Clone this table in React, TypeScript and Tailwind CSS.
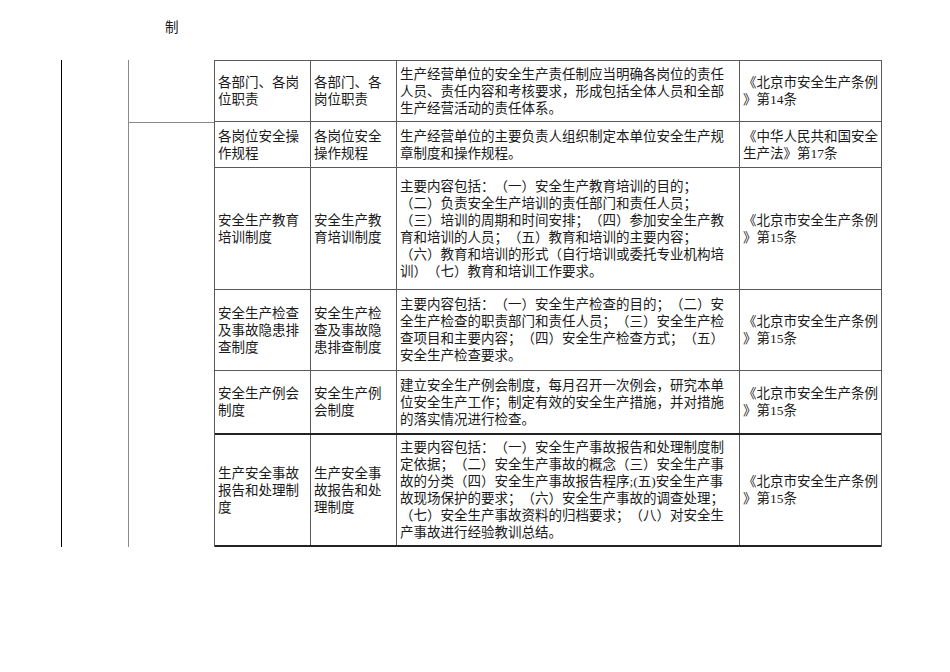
import React from "react";

type Row = {
  h: string;
  name: string[];
  name2: string[];
  content: string[];
  basis: string[];
};

const beijing = ["《北京市安全生产条例", "》第15条"];

const rows: Row[] = [
  {
    h: "h-[61px]",
    name: ["各部门、各岗", "位职责"],
    name2: ["各部门、各", "岗位职责"],
    content: [
      "生产经营单位的安全生产责任制应当明确各岗位的责任",
      "人员、责任内容和考核要求，形成包括全体人员和全部",
      "生产经营活动的责任体系。",
    ],
    basis: ["《北京市安全生产条例", "》第14条"],
  },
  {
    h: "h-[46px]",
    name: ["各岗位安全操", "作规程"],
    name2: ["各岗位安全", "操作规程"],
    content: ["生产经营单位的主要负责人组织制定本单位安全生产规", "章制度和操作规程。"],
    basis: ["《中华人民共和国安全", "生产法》第17条"],
  },
  {
    h: "h-[122px]",
    name: ["安全生产教育", "培训制度"],
    name2: ["安全生产教", "育培训制度"],
    content: [
      "主要内容包括：（一）安全生产教育培训的目的；",
      "（二）负责安全生产培训的责任部门和责任人员；",
      "（三）培训的周期和时间安排；（四）参加安全生产教",
      "育和培训的人员；（五）教育和培训的主要内容；",
      "（六）教育和培训的形式（自行培训或委托专业机构培",
      "训）（七）教育和培训工作要求。",
    ],
    basis: beijing,
  },
  {
    h: "h-[81px]",
    name: ["安全生产检查", "及事故隐患排", "查制度"],
    name2: ["安全生产检", "查及事故隐", "患排查制度"],
    content: [
      "主要内容包括：（一）安全生产检查的目的；（二）安",
      "全生产检查的职责部门和责任人员；（三）安全生产检",
      "查项目和主要内容；（四）安全生产检查方式；（五）",
      "安全生产检查要求。",
    ],
    basis: beijing,
  },
  {
    h: "h-[64px]",
    name: ["安全生产例会", "制度"],
    name2: ["安全生产例", "会制度"],
    content: [
      "建立安全生产例会制度，每月召开一次例会，研究本单",
      "位安全生产工作；制定有效的安全生产措施，并对措施",
      "的落实情况进行检查。",
    ],
    basis: beijing,
  },
  {
    h: "h-[112px]",
    name: ["生产安全事故", "报告和处理制", "度"],
    name2: ["生产安全事", "故报告和处", "理制度"],
    content: [
      "主要内容包括：（一）安全生产事故报告和处理制度制",
      "定依据；（二）安全生产事故的概念（三）安全生产事",
      "故的分类（四）安全生产事故报告程序;(五)安全生产事",
      "故现场保护的要求；（六）安全生产事故的调查处理；",
      "（七）安全生产事故资料的归档要求；（八）对安全生",
      "产事故进行经验教训总结。",
    ],
    basis: beijing,
  },
];

function Cell({ lines, w, last }: { lines: string[]; w: string; last?: boolean }) {
  return (
    <div className={`${w} flex flex-col justify-center pl-[3px] ${last ? "" : "border-r border-[#5a5a5a]"}`}>
      {lines.map((l, i) => (
        <div key={i} className="whitespace-nowrap leading-[17px]">
          {l}
        </div>
      ))}
    </div>
  );
}

export default function App() {
  return (
    <div
      className="w-[950px] h-[672px] bg-white text-[#1a1a1a] text-[13.5px] [text-spacing-trim:space-all]"
      style={{ fontFamily: '"Liberation Serif", "Noto Sans CJK SC", serif' }}
    >
      <div className="h-[60px] pl-[165px] pt-[19px] leading-[17px]">制</div>
      <div className="flex ml-[61px]">
        <div className="w-[67px] border-l border-black" />
        <div className="w-[86px] border-l border-[#8a8a8a] flex flex-col">
          <div className="h-[62px]" />
          <div className="flex-1 border-t border-[#8a8a8a]" />
        </div>
        <div className="w-[668px] border-l border-t border-[#5a5a5a] border-r">
          {rows.map((r, i) => (
            <div
              key={i}
              className={`flex ${r.h} ${
                i === rows.length - 1 || i === rows.length - 2
                  ? "border-b-2 border-[#222]"
                  : "border-b border-[#5a5a5a]"
              }`}
            >
              <Cell lines={r.name} w="w-[96px]" />
              <Cell lines={r.name2} w="w-[86px]" />
              <Cell lines={r.content} w="w-[343px]" />
              <Cell lines={r.basis} w="w-[141px]" last />
            </div>
          ))}
        </div>
      </div>
    </div>
  );
}
